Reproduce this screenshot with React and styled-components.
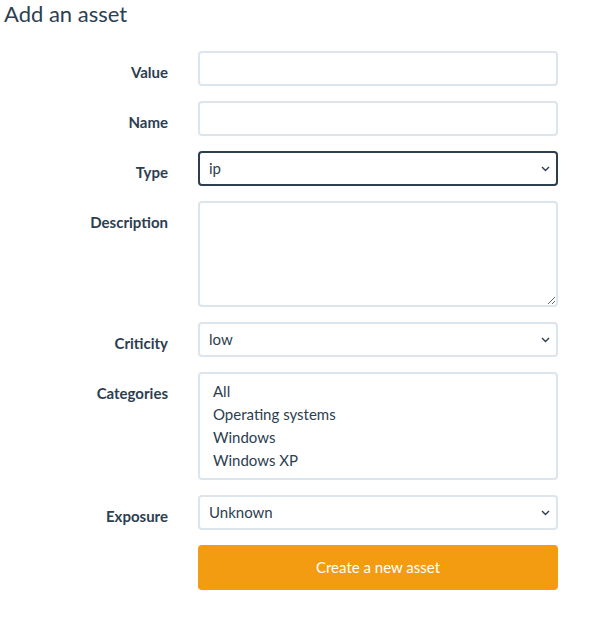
import styled, { createGlobalStyle } from "styled-components"

const Global = createGlobalStyle`
  html, body {
    margin: 0;
    padding: 0;
    background: #fff;
    font-family: Lato, "Open Sans", sans-serif;
    color: #2c3e50;
  }
`

const Page = styled.div`
  padding: 0 4px;
`

const Title = styled.h3`
  margin: 0;
  font-size: 22px;
  font-weight: 400;
  line-height: 28px;
  color: #2c3e50;
`

const Form = styled.form`
  display: grid;
  grid-template-columns: 164px 360px;
  column-gap: 30px;
  row-gap: 15px;
  margin-top: 23px;
`

const Label = styled.label`
  text-align: right;
  font-weight: 700;
  font-size: 15px;
  line-height: 20px;
  padding-top: 11px;
`

const fieldCss = `
  box-sizing: border-box;
  width: 360px;
  border: 2px solid #dce4ec;
  border-radius: 4px;
  font-family: Lato, "Open Sans", sans-serif;
  font-size: 15px;
  color: #2c3e50;
  background: #fff;
  outline: none;
  margin: 0;
  &:focus {
    border-color: #2c3e50;
  }
`

const Input = styled.input`
  ${fieldCss}
  height: 35px;
  padding: 0 9px;
`

const SelectWrap = styled.div`
  position: relative;
  width: 360px;
  height: 35px;
`

const Select = styled.select`
  ${fieldCss}
  display: block;
  height: 35px;
  padding: 0 9px 2px;
  appearance: none;
  -webkit-appearance: none;
  border-color: ${(p) => (p.$active ? "#2c3e50" : "#dce4ec")};
`

const Chevron = styled.svg`
  position: absolute;
  right: 8px;
  top: 15px;
  width: 9px;
  height: 6px;
  pointer-events: none;
`

const TextArea = styled.textarea`
  ${fieldCss}
  display: block;
  height: 106px;
  padding: 6px 9px;
  resize: vertical;
`

const ListBox = styled.select`
  ${fieldCss}
  height: 108px;
  padding: 8px 13px;
  overflow: hidden;
  option {
    padding: 0;
    line-height: 23px;
    height: 23px;
    color: #2c3e50;
  }
`

const Spacer = styled.div``

const Button = styled.button`
  box-sizing: border-box;
  width: 360px;
  height: 45px;
  border: none;
  border-radius: 4px;
  background: #f39c12;
  color: #fff;
  font-family: Lato, "Open Sans", sans-serif;
  font-size: 15px;
  padding-bottom: 2px;
  cursor: pointer;
`

function Dropdown({ active, value, options }) {
  return (
    <SelectWrap>
      <Select $active={active} defaultValue={value}>
        {options.map((o) => (
          <option key={o} value={o}>
            {o}
          </option>
        ))}
      </Select>
      <Chevron viewBox="0 0 9 6">
        <path d="M1 1l3.5 3.5L8 1" fill="none" stroke="#2c3e50" strokeWidth="1.4" />
      </Chevron>
    </SelectWrap>
  )
}

export default function App() {
  return (
    <Page>
      <Global />
      <Title>Add an asset</Title>
      <Form onSubmit={(e) => e.preventDefault()}>
        <Label>Value</Label>
        <Input type="text" />
        <Label>Name</Label>
        <Input type="text" />
        <Label>Type</Label>
        <Dropdown active value="ip" options={["ip", "domain", "url"]} />
        <Label>Description</Label>
        <TextArea />
        <Label>Criticity</Label>
        <Dropdown value="low" options={["low", "medium", "high"]} />
        <Label>Categories</Label>
        <ListBox multiple size={4}>
          <option>All</option>
          <option>Operating systems</option>
          <option>Windows</option>
          <option>Windows XP</option>
        </ListBox>
        <Label>Exposure</Label>
        <Dropdown value="Unknown" options={["Unknown", "Internal", "External"]} />
        <Spacer />
        <Button type="submit">Create a new asset</Button>
      </Form>
    </Page>
  )
}
